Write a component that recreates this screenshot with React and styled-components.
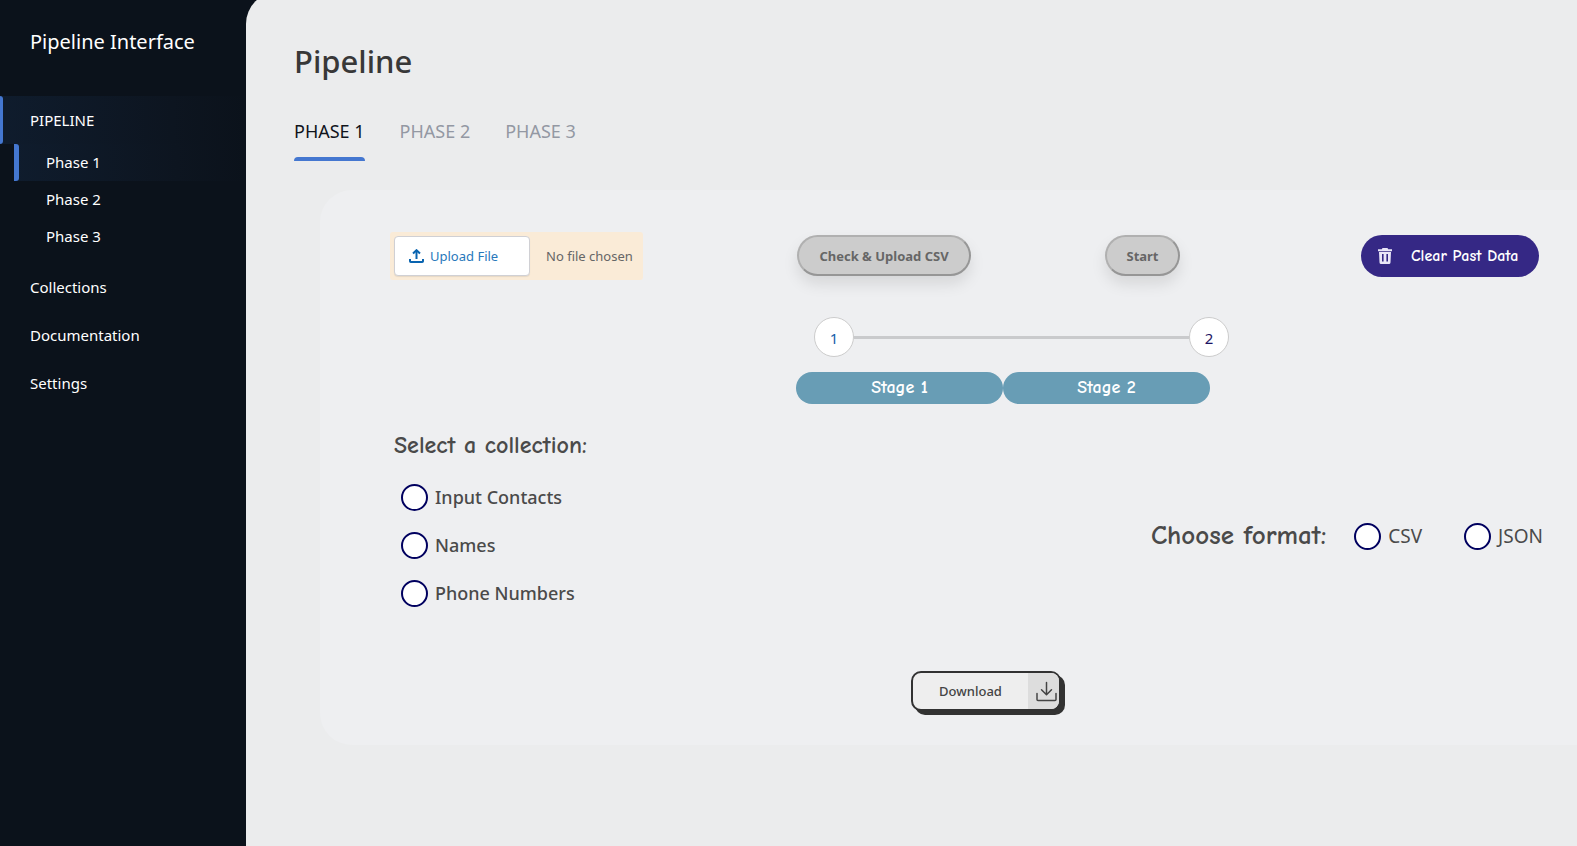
import React from "react";
import styled, { createGlobalStyle } from "styled-components";

const ui = `"Segoe UI", "Noto Sans", "Open Sans", sans-serif`;
const comic = `"Comic Sans MS", "Comic Neue", "Noto Sans", sans-serif`;

const GlobalStyle = createGlobalStyle`
  *, *::before, *::after { box-sizing: border-box; }
  body { margin: 0; background: #0b121b; font-family: ${ui}; }
  button, input { font-family: inherit; }
`;

const Shell = styled.div`
  display: flex;
  min-height: 100vh;
  overflow: hidden;
`;

const Sidebar = styled.nav`
  flex: 0 0 246px;
  color: #fff;
`;

const Brand = styled.div`
  padding: 26px 30px 0;
  height: 96px;
  font-size: 20px;
  line-height: 32px;
  white-space: nowrap;
`;

const NavLink = styled.a`
  display: block;
  position: relative;
  padding-left: 30px;
  font-size: 15px;
  line-height: 48px;
  color: #fff;
  text-decoration: none;
  background: ${(p) => (p.$active ? "linear-gradient(90deg, #0f1c2d, #0d1520 70%, #0b121b)" : "none")};

  &::before {
    content: "";
    display: ${(p) => (p.$active ? "block" : "none")};
    position: absolute;
    left: 0;
    top: 0;
    bottom: 0;
    width: 3px;
    border-radius: 0 3px 3px 0;
    background: #4477d0;
  }
`;

const SubNav = styled.div`
  padding: 0 0 8px 14px;
`;

const SubLink = styled(NavLink)`
  padding-left: 32px;
  line-height: 37px;

  &::before { width: 5px; }
`;

const Main = styled.main`
  flex: 1;
  min-width: 0;
  margin-top: -8px;
  padding: 41px 0 48px 48px;
  border-top-left-radius: 32px;
  background: #ebeced;
`;

const Title = styled.h1`
  margin: 0;
  font-size: 31px;
  line-height: 56px;
  font-weight: 500;
  color: #383838;
`;

const Tabs = styled.div`
  display: flex;
  gap: 35px;
  margin-top: 30px;
`;

const Tab = styled.button`
  padding: 0;
  height: 42px;
  border: 0;
  background: none;
  font-size: 18px;
  line-height: 24px;
  color: ${(p) => (p.$active ? "#10141c" : "#9398a3")};
  display: flex;
  flex-direction: column;
  justify-content: space-between;

  &::after {
    content: "";
    width: 100%;
    height: 4px;
    border-radius: 4px 4px 0 0;
    background: ${(p) => (p.$active ? "#4477d0" : "transparent")};
  }
`;

const Panel = styled.section`
  margin: 29px 0 0 26px;
  padding: 42px 0 34px 70px;
  border-radius: 32px 0 0 32px;
  background: #eeeff1;
`;

const Actions = styled.div`
  display: grid;
  grid-template-columns: 406px 1fr auto;
  align-items: start;
  padding-right: 38px;
`;

const Upload = styled.label`
  display: flex;
  align-items: center;
  width: 253px;
  height: 48px;
  padding: 4px;
  border-radius: 3px;
  background: #faebd7;
  position: relative;
  font-size: 13px;
  color: #666;
  white-space: nowrap;

  input { position: absolute; inset: 0; opacity: 0; width: 100%; }
`;

const UploadFace = styled.span`
  display: flex;
  align-items: center;
  gap: 6px;
  width: 136px;
  height: 40px;
  padding-left: 14px;
  margin-right: 16px;
  border: 1px solid #d0d0d4;
  border-radius: 4px;
  background: #fff;
  box-shadow: 0 1px 1px rgba(0, 0, 0, 0.08);
  color: #2878bb;
`;

const Flow = styled.div`
  width: 433px;
  padding-top: 3px;
`;

const FlowButtons = styled.div`
  display: flex;
  gap: 134px;
  padding-left: 1px;
`;

const GreyButton = styled.button`
  width: ${(p) => p.$width};
  height: 41px;
  padding: 0;
  border: 2px solid;
  border-color: #b0b0b0 #969696 #969696 #b0b0b0;
  border-radius: 21px;
  background: #ccc;
  box-shadow: 0 8px 15px rgba(0, 0, 0, 0.1);
  color: #666;
  font-size: 13px;
  font-weight: 700;
  white-space: nowrap;
`;

const Steps = styled.div`
  display: flex;
  align-items: center;
  margin: 41px 0 0 18px;
`;

const Step = styled.span`
  width: 40px;
  height: 40px;
  border: 1px solid #ccc;
  border-radius: 50%;
  background: #fff;
  color: ${(p) => p.$color};
  font-size: 15px;
  line-height: 40px;
  text-align: center;
`;

const StepLine = styled.span`
  flex: 1;
  height: 3px;
  background: #c9cacc;
`;

const Stages = styled.div`
  display: flex;
  margin-top: 15px;
  width: 414px;
`;

const Stage = styled.span`
  flex: 1;
  border-radius: 16px;
  background: #689db5;
  color: #fff;
  font: 700 18px/32px ${comic};
  text-align: center;
`;

const ClearButton = styled.button`
  display: flex;
  align-items: center;
  gap: 18px;
  width: 178px;
  height: 42px;
  margin-top: 3px;
  padding: 0 0 0 16px;
  border: 0;
  border-radius: 21px;
  background: #352885;
  color: #fff;
  font: 800 16px/20px ${comic};
  white-space: nowrap;
`;

const Choices = styled.div`
  display: flex;
  justify-content: space-between;
  margin-top: 25px;
  padding: 0 34px 0 4px;
`;

const Fieldset = styled.fieldset`
  min-width: 0;
  margin: 0;
  padding: 0;
  border: 0;
`;

const FormatSet = styled(Fieldset)`
  display: flex;
  align-items: center;
  height: 48px;
  margin-top: 83px;
`;

const Legend = styled.h2`
  margin: 0;
  font: 700 ${(p) => p.$size}/32px ${comic};
  color: #4a4a4a;
  white-space: nowrap;
`;

const CollectionList = styled.div`
  padding: 12px 0 0 7px;
`;

const FormatList = styled.div`
  display: flex;
  gap: 42px;
  margin-left: 28px;
`;

const Choice = styled.label`
  display: flex;
  align-items: center;
  gap: 7px;
  height: 48px;
  font-size: ${(p) => p.$size};
  font-weight: ${(p) => p.$weight};
  color: #4a4a4a;
  white-space: nowrap;
`;

const Radio = styled.input`
  appearance: none;
  width: 27px;
  height: 27px;
  margin: 0;
  border: 2px solid #00005f;
  border-radius: 50%;
  background: #fff;

  &:checked { box-shadow: inset 0 0 0 5px #fff; background: #00005f; }
`;

const Footer = styled.div`
  display: flex;
  justify-content: center;
  margin-top: 54px;
  padding-left: 5px;
`;

const DownloadButton = styled.button`
  display: flex;
  width: 150px;
  height: 40px;
  padding: 0;
  border: 2px solid #323232;
  border-radius: 10px;
  overflow: hidden;
  background: #eee;
  box-shadow: 4px 4px #323232;
  color: #444;
  font-size: 13px;
  font-weight: 500;
  line-height: 36px;
`;

const DownloadText = styled.span`
  flex: 1;
`;

const DownloadIcon = styled.span`
  display: flex;
  align-items: center;
  justify-content: flex-end;
  width: 31px;
  height: 36px;
  padding-right: 2px;
  background: #ddd;
`;

function RadioChoice({ name, label, size = "18px", weight = 500 }) {
  return (
    <Choice $size={size} $weight={weight}>
      <Radio type="radio" name={name} />
      {label}
    </Choice>
  );
}

export default function App() {
  return (
    <>
      <GlobalStyle />
      <Shell>
        <Sidebar>
          <Brand>Pipeline Interface</Brand>
          <NavLink href="#pipeline" $active>PIPELINE</NavLink>
          <SubNav>
            <SubLink href="#phase-1" $active>Phase 1</SubLink>
            <SubLink href="#phase-2">Phase 2</SubLink>
            <SubLink href="#phase-3">Phase 3</SubLink>
          </SubNav>
          <NavLink href="#collections">Collections</NavLink>
          <NavLink href="#documentation">Documentation</NavLink>
          <NavLink href="#settings">Settings</NavLink>
        </Sidebar>
        <Main>
          <Title>Pipeline</Title>
          <Tabs>
            <Tab $active>PHASE 1</Tab>
            <Tab>PHASE 2</Tab>
            <Tab>PHASE 3</Tab>
          </Tabs>
          <Panel>
            <Actions>
              <Upload>
                <UploadFace>
                  <svg width="15" height="15" viewBox="0 0 15 15" fill="none" stroke="#0964b0" strokeWidth="2">
                    <path d="M1 10v2.2q0 .8.8.8h11.4q.8 0 .8-.8V10" />
                    <path d="M7.500 10V2" />
                    <path d="M4 4.500L7.500 1.200L11 4.500" />
                  </svg>
                  Upload File
                </UploadFace>
                No file chosen
                <input type="file" />
              </Upload>
              <Flow>
                <FlowButtons>
                  <GreyButton $width="174px">Check &amp; Upload CSV</GreyButton>
                  <GreyButton $width="75px">Start</GreyButton>
                </FlowButtons>
                <Steps>
                  <Step $color="#1460aa">1</Step>
                  <StepLine />
                  <Step $color="#1c1464">2</Step>
                </Steps>
                <Stages>
                  <Stage>Stage 1</Stage>
                  <Stage>Stage 2</Stage>
                </Stages>
              </Flow>
              <ClearButton>
                <svg width="16" height="18" viewBox="0 0 16 18" fill="#e9e6f7">
                  <path fillRule="evenodd" d="M5.500 1h5l.7 1.200H15v2H1v-2h3.800zM2 5h12l-.5 10.500q-.1 1.500-1.600 1.500H4.100q-1.500 0-1.600-1.500zM5 7v7.500h1.600V7zM9.400 7v7.500H11V7z" />
                </svg>
                Clear Past Data
              </ClearButton>
            </Actions>
            <Choices>
              <Fieldset aria-labelledby="collection-title">
                <Legend id="collection-title" $size="24px">Select a collection:</Legend>
                <CollectionList>
                  <RadioChoice name="collection" label="Input Contacts" />
                  <RadioChoice name="collection" label="Names" />
                  <RadioChoice name="collection" label="Phone Numbers" />
                </CollectionList>
              </Fieldset>
              <FormatSet aria-labelledby="format-title">
                <Legend id="format-title" $size="27px">Choose format:</Legend>
                <FormatList>
                  <RadioChoice name="format" label="CSV" size="19px" weight={400} />
                  <RadioChoice name="format" label="JSON" size="19px" weight={400} />
                </FormatList>
              </FormatSet>
            </Choices>
            <Footer>
              <DownloadButton>
                <DownloadText>Download</DownloadText>
                <DownloadIcon>
                  <svg width="21" height="21" viewBox="0 0 21 21" fill="none" stroke="#444" strokeWidth="1.500" strokeLinecap="round" strokeLinejoin="round">
                    <path d="M1 12.500v6q0 1 1 1h17q1 0 1-1v-6" />
                    <path d="M10.500 1.500v12M5.500 8.800l5 5l5-5" />
                  </svg>
                </DownloadIcon>
              </DownloadButton>
            </Footer>
          </Panel>
        </Main>
      </Shell>
    </>
  );
}
